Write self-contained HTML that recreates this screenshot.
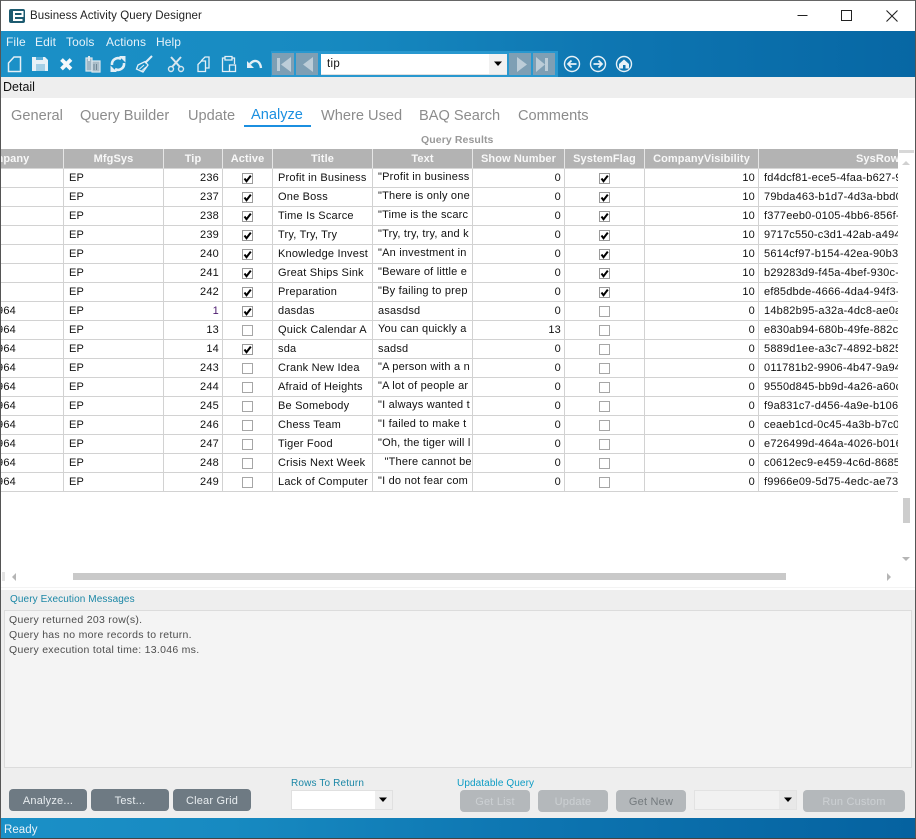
<!DOCTYPE html>
<html><head><meta charset="utf-8"><title>Business Activity Query Designer</title>
<style>
html,body{margin:0;padding:0;width:916px;height:839px;overflow:hidden;background:#fff}
body{position:relative;font-family:"Liberation Sans",Arial,sans-serif;font-size:11px;color:#111}
.a{position:absolute;white-space:nowrap}
.band{background:linear-gradient(90deg,#1b90c7 0%,#178ac1 35%,#0d74b0 70%,#0767a4 100%)}
.tab{position:absolute;top:107px;font-size:14.6px;line-height:18px;color:#8c8c8c;white-space:nowrap}
.m{position:absolute;top:35px;font-size:12px;line-height:14px;color:#e6f2f9;letter-spacing:.1px}
.nb{position:absolute;top:53px;width:22px;height:22px;background:#7e9fb4}
#g{position:absolute;left:0;top:149px;width:898px;height:345px;overflow:hidden}
table{position:absolute;left:-55px;top:0;border-collapse:separate;border-spacing:0;table-layout:fixed;width:974px}
th{height:19px;padding:0;background:#b3b3b3;color:#f8f8f8;font-size:11px;font-weight:bold;text-align:center;border-right:1px solid #e6e6e6;border-bottom:1px solid #d6d6d6;letter-spacing:.1px;overflow:hidden;white-space:nowrap}
td{height:18px;padding:0 5px;border-right:1px solid #d2d2d2;border-bottom:1px solid #d2d2d2;overflow:hidden;white-space:nowrap;letter-spacing:.2px;color:#111;text-overflow:clip}
td.r{text-align:right;padding-right:3px}
td.c{padding:0;text-align:center}
td.co{text-align:right;padding-right:47px}
td:nth-child(6){vertical-align:top;line-height:16px}
td.k:nth-child(6){line-height:18px}
.cb{display:block;margin:0 auto;width:11px;height:11px}
.btn{position:absolute;top:789px;height:22px;width:78px;background:#6e7a83;border-radius:4px;color:#e8edf0;text-align:center;line-height:24px;font-size:11px;letter-spacing:.2px}
.dis{position:absolute;top:790px;height:22px;background:#b4b8bb;border-radius:4px;color:#ccd0d3;text-align:center;line-height:24px;font-size:11px;letter-spacing:.2px}
.lb{position:absolute;font-size:10px;line-height:12px;white-space:nowrap;letter-spacing:.1px}
.msg{position:absolute;left:9px;font-size:10.5px;line-height:13px;color:#4d4d4d;white-space:nowrap;letter-spacing:.28px}
</style></head><body>
<svg width="0" height="0" style="position:absolute"><defs>
<symbol id="y" viewBox="0 0 11 11"><rect x=".5" y=".5" width="10" height="10" fill="#fff" stroke="#9a9a9a"/><path d="M2.500 5.500L4.500 8.200 8.800 2.600" fill="none" stroke="#000" stroke-width="2"/></symbol>
<symbol id="n" viewBox="0 0 11 11"><rect x=".5" y=".5" width="10" height="10" fill="#fff" stroke="#a6a6a6"/></symbol>
</defs></svg>

<!-- window chrome -->
<div class="a" style="left:0;top:0;width:916px;height:1px;background:#666"></div>
<div class="a" style="left:9px;top:9px;width:16px;height:14px;background:#1d5b70;border-radius:2px"></div>
<svg class="a" style="left:9px;top:9px" width="16" height="14"><path d="M5 7H13.500V3H5V11H13.500" fill="none" stroke="#fff" stroke-width="2"/></svg>
<div class="a" style="left:30px;top:9px;font-size:11.5px;line-height:14px;color:#222;letter-spacing:.08px">Business Activity Query Designer</div>
<svg class="a" style="left:790px;top:5px" width="120" height="20"><path d="M7.500 10.500H17.500" stroke="#222"/><rect x="51.500" y="5.500" width="10" height="10" fill="none" stroke="#222"/><path d="M96.500 5.500L107.500 16.500M107.500 5.500L96.500 16.500" stroke="#222" stroke-width="1.100"/></svg>

<div class="a band" style="left:1px;top:31px;width:914px;height:46px"></div>
<div class="m" style="left:6px">File</div>
<div class="m" style="left:35px">Edit</div>
<div class="m" style="left:66px">Tools</div>
<div class="m" style="left:106px">Actions</div>
<div class="m" style="left:156px">Help</div>

<svg class="a" style="left:0;top:50px" width="270" height="27" fill="none" stroke="#e4eff6" stroke-width="1.500">
<path d="M8.500 21.500V13L14 7H20.500V21.500Z"/>
<path d="M32 7H45L48 10V21H32Z" fill="#e8f1f7" stroke="none"/><path d="M36 7H43V10H36Z" fill="#5aaed8" stroke="none"/><path d="M36 14H45V21H36Z" fill="#a4cfe6" stroke="none"/>
<path d="M61.500 9.500L71 19M71 9.500L61.500 19" stroke="#f4f8fb" stroke-width="3.800"/>
<path d="M86 8H92V21H86Z" fill="#9fb7c6" stroke="#dbe7ee" stroke-width="1.200"/><path d="M92 11H100V22H92Z" fill="#a9bdc9" stroke="#dbe7ee" stroke-width="1.200"/><path d="M88 6H90V11H88Z" fill="#dbe7ee" stroke="none"/><path d="M94 14V20M96.500 14V20" stroke="#6f8796" stroke-width="1"/>
<path d="M112 15A6 6 0 0 1 121 9M124 13A6 6 0 0 1 115 19" stroke-width="2.600"/><path d="M119 6L125.500 6 125.500 12.500ZM117 22L110.500 22 110.500 15.500Z" fill="#e4eff6" stroke="none"/>
<path d="M145 13L152 6" stroke-width="2"/><path d="M138 15L145 11.500 148 15 143 22 136.500 19Z" stroke-width="1.300"/><path d="M139.500 19L144 15M141.500 21L146 17" stroke-width="1"/>
<path d="M171 7L180 17M181 7L172 17" stroke-width="2" stroke="#d8e6ee"/><circle cx="171" cy="19" r="2.500" stroke-width="1.400" stroke="#d8e6ee"/><circle cx="181" cy="19" r="2.500" stroke-width="1.400" stroke="#d8e6ee"/>
<path d="M198 14.500L201.500 11H205.500V21.500H198ZM201.500 11V10.500L205 7H209V18H205.500" stroke-width="1.300"/>
<path d="M225 8H222.500V21.500H229M232 8H234.500V14M225 6.500H232V10H225ZM229.500 15H235.500V21.500H229.500Z" stroke-width="1.300"/>
<path d="M250 14C254 9 260 10 261 18" stroke-width="2.400"/><path d="M247 11V18H254Z" fill="#e4eff6" stroke="none"/>
</svg>

<div class="a" style="left:271px;top:51px;width:287px;height:26px;background:#2898cf"></div>
<div class="nb" style="left:272px"></div><div class="nb" style="left:296px"></div>
<div class="nb" style="left:509px"></div><div class="nb" style="left:533px"></div>
<svg class="a" style="left:270px;top:51px" width="290" height="26" fill="#bccdd8"><path d="M7 7H10V20H7ZM21 6V21L11 13.500ZM43 6V21L33 13.500Z"/><path d="M247 6V21L257 13.500ZM266 6V21L275 13.500ZM275 7H278V20H275Z"/></svg>
<div class="a" style="left:321px;top:54px;width:186px;height:20px;background:#fff;border-bottom:1px solid #e0e0e0"></div>
<div class="a" style="left:489px;top:54px;width:18px;height:20px;background:#f1f1f1"></div>
<svg class="a" style="left:493px;top:61px" width="10" height="6"><path d="M1 0.500H9L5 5Z" fill="#000"/></svg>
<div class="a" style="left:327px;top:57px;font-size:11.500px;line-height:14px;color:#111;letter-spacing:.3px">tip</div>
<svg class="a" style="left:562px;top:53px" width="72" height="22" fill="none" stroke="#e7f1f7" stroke-width="1.400">
<circle cx="10" cy="11" r="7.500"/><path d="M14.500 11H6M9.500 7.500L6 11 9.500 14.500" stroke-width="1.700"/>
<circle cx="36" cy="11" r="7.500"/><path d="M31.500 11H40M36.500 7.500L40 11 36.500 14.500" stroke-width="1.700"/>
<circle cx="62" cy="11" r="7.500"/><path d="M57 11L62 6.500 67 11V15.500H57Z" fill="#e7f1f7" stroke="none"/><path d="M61 12H63.500V15.500H61Z" fill="#0d74b0" stroke="none"/>
</svg>

<!-- detail band -->
<div class="a" style="left:1px;top:77px;width:914px;height:21px;background:#eeeeee"></div>
<div class="a" style="left:3px;top:80px;font-size:12.500px;line-height:14px;color:#111">Detail</div>

<!-- tabs -->
<div class="tab" style="left:11px">General</div>
<div class="tab" style="left:80px">Query Builder</div>
<div class="tab" style="left:188px">Update</div>
<div class="tab" style="left:251px;top:106px;color:#1b8fe0">Analyze</div>
<div class="a" style="left:244px;top:125px;width:67px;height:2px;background:#1b8fe0"></div>
<div class="tab" style="left:321px">Where Used</div>
<div class="tab" style="left:419px">BAQ Search</div>
<div class="tab" style="left:518px">Comments</div>

<div class="a" style="left:421px;top:134px;font-size:10.500px;line-height:12px;font-weight:bold;color:#999;letter-spacing:.1px">Query Results</div>

<!-- grid -->
<div id="g"><table>
<colgroup><col style="width:119px"><col style="width:100px"><col style="width:59px"><col style="width:50px"><col style="width:100px"><col style="width:100px"><col style="width:92px"><col style="width:80px"><col style="width:114px"><col style="width:160px"></colgroup>
<tr><th>Company</th><th>MfgSys</th><th>Tip</th><th>Active</th><th>Title</th><th>Text</th><th>Show Number</th><th>SystemFlag</th><th>CompanyVisibility</th><th style="text-align:left;padding-left:97px">SysRowID</th></tr>
<tr><td></td><td>EP</td><td class="r">236</td><td class="c"><svg class="cb"><use href="#y"/></svg></td><td>Profit in Business</td><td>"Profit in business</td><td class="r">0</td><td class="c"><svg class="cb"><use href="#y"/></svg></td><td class="r">10</td><td>fd4dcf81-ece5-4faa-b627-9a1c3</td></tr>
<tr><td></td><td>EP</td><td class="r">237</td><td class="c"><svg class="cb"><use href="#y"/></svg></td><td>One Boss</td><td>"There is only one</td><td class="r">0</td><td class="c"><svg class="cb"><use href="#y"/></svg></td><td class="r">10</td><td>79bda463-b1d7-4d3a-bbd0-1e2f</td></tr>
<tr><td></td><td>EP</td><td class="r">238</td><td class="c"><svg class="cb"><use href="#y"/></svg></td><td>Time Is Scarce</td><td>"Time is the scarc</td><td class="r">0</td><td class="c"><svg class="cb"><use href="#y"/></svg></td><td class="r">10</td><td>f377eeb0-0105-4bb6-856f-9c1d2</td></tr>
<tr><td></td><td>EP</td><td class="r">239</td><td class="c"><svg class="cb"><use href="#y"/></svg></td><td>Try, Try, Try</td><td>"Try, try, try, and k</td><td class="r">0</td><td class="c"><svg class="cb"><use href="#y"/></svg></td><td class="r">10</td><td>9717c550-c3d1-42ab-a494-1f2e3</td></tr>
<tr><td></td><td>EP</td><td class="r">240</td><td class="c"><svg class="cb"><use href="#y"/></svg></td><td>Knowledge Invest</td><td>"An investment in</td><td class="r">0</td><td class="c"><svg class="cb"><use href="#y"/></svg></td><td class="r">10</td><td>5614cf97-b154-42ea-90b3-9e1d</td></tr>
<tr><td></td><td>EP</td><td class="r">241</td><td class="c"><svg class="cb"><use href="#y"/></svg></td><td>Great Ships Sink</td><td>"Beware of little e</td><td class="r">0</td><td class="c"><svg class="cb"><use href="#y"/></svg></td><td class="r">10</td><td>b29283d9-f45a-4bef-930c-9e1d</td></tr>
<tr><td></td><td>EP</td><td class="r">242</td><td class="c"><svg class="cb"><use href="#y"/></svg></td><td>Preparation</td><td>"By failing to prep</td><td class="r">0</td><td class="c"><svg class="cb"><use href="#y"/></svg></td><td class="r">10</td><td>ef85dbde-4666-4da4-94f3-9e1d</td></tr>
<tr><td class="co">964</td><td>EP</td><td class="r" style="color:#4b1a6e">1</td><td class="c"><svg class="cb"><use href="#y"/></svg></td><td>dasdas</td><td class="k">asasdsd</td><td class="r">0</td><td class="c"><svg class="cb"><use href="#n"/></svg></td><td class="r">0</td><td>14b82b95-a32a-4dc8-ae0a-1e2f</td></tr>
<tr><td class="co">964</td><td>EP</td><td class="r">13</td><td class="c"><svg class="cb"><use href="#n"/></svg></td><td>Quick Calendar A</td><td>You can quickly a</td><td class="r">13</td><td class="c"><svg class="cb"><use href="#n"/></svg></td><td class="r">0</td><td>e830ab94-680b-49fe-882c-9e1d</td></tr>
<tr><td class="co">964</td><td>EP</td><td class="r">14</td><td class="c"><svg class="cb"><use href="#y"/></svg></td><td>sda</td><td class="k">sadsd</td><td class="r">0</td><td class="c"><svg class="cb"><use href="#n"/></svg></td><td class="r">0</td><td>5889d1ee-a3c7-4892-b825-1e2f</td></tr>
<tr><td class="co">964</td><td>EP</td><td class="r">243</td><td class="c"><svg class="cb"><use href="#n"/></svg></td><td>Crank New Idea</td><td>"A person with a n</td><td class="r">0</td><td class="c"><svg class="cb"><use href="#n"/></svg></td><td class="r">0</td><td>011781b2-9906-4b47-9a94-1e2f</td></tr>
<tr><td class="co">964</td><td>EP</td><td class="r">244</td><td class="c"><svg class="cb"><use href="#n"/></svg></td><td>Afraid of Heights</td><td>"A lot of people ar</td><td class="r">0</td><td class="c"><svg class="cb"><use href="#n"/></svg></td><td class="r">0</td><td>9550d845-bb9d-4a26-a60c-1e2f</td></tr>
<tr><td class="co">964</td><td>EP</td><td class="r">245</td><td class="c"><svg class="cb"><use href="#n"/></svg></td><td>Be Somebody</td><td>"I always wanted t</td><td class="r">0</td><td class="c"><svg class="cb"><use href="#n"/></svg></td><td class="r">0</td><td>f9a831c7-d456-4a9e-b106-1e2f</td></tr>
<tr><td class="co">964</td><td>EP</td><td class="r">246</td><td class="c"><svg class="cb"><use href="#n"/></svg></td><td>Chess Team</td><td>"I failed to make t</td><td class="r">0</td><td class="c"><svg class="cb"><use href="#n"/></svg></td><td class="r">0</td><td>ceaeb1cd-0c45-4a3b-b7c0-1e2f</td></tr>
<tr><td class="co">964</td><td>EP</td><td class="r">247</td><td class="c"><svg class="cb"><use href="#n"/></svg></td><td>Tiger Food</td><td>"Oh, the tiger will l</td><td class="r">0</td><td class="c"><svg class="cb"><use href="#n"/></svg></td><td class="r">0</td><td>e726499d-464a-4026-b016-1e2f</td></tr>
<tr><td class="co">964</td><td>EP</td><td class="r">248</td><td class="c"><svg class="cb"><use href="#n"/></svg></td><td>Crisis Next Week</td><td>&nbsp;&nbsp;"There cannot be</td><td class="r">0</td><td class="c"><svg class="cb"><use href="#n"/></svg></td><td class="r">0</td><td>c0612ec9-e459-4c6d-8685-1e2f</td></tr>
<tr><td class="co">964</td><td>EP</td><td class="r">249</td><td class="c"><svg class="cb"><use href="#n"/></svg></td><td>Lack of Computer</td><td>"I do not fear com</td><td class="r">0</td><td class="c"><svg class="cb"><use href="#n"/></svg></td><td class="r">0</td><td>f9966e09-5d75-4edc-ae73-1e2f</td></tr>
</table></div>

<!-- scrollbars -->
<div class="a" style="left:899px;top:150px;width:15px;height:3px;background:#d8d8d8"></div>
<svg class="a" style="left:900px;top:159px" width="12" height="8"><path d="M2 6H10L6 2Z" fill="#d0d0d0"/></svg>
<div class="a" style="left:903px;top:498px;width:7px;height:25px;background:#cdcdcd"></div>
<svg class="a" style="left:900px;top:556px" width="12" height="7"><path d="M2 1H10L6 5Z" fill="#b5b5b5"/></svg>
<div class="a" style="left:2px;top:572px;width:3px;height:9px;background:#e4e4e4"></div>
<svg class="a" style="left:10px;top:572px" width="8" height="10"><path d="M6 1V9L2 5Z" fill="#b5b5b5"/></svg>
<div class="a" style="left:73px;top:573px;width:713px;height:7px;background:#c9c9c9"></div>
<svg class="a" style="left:885px;top:572px" width="8" height="10"><path d="M2 1V9L6 5Z" fill="#b5b5b5"/></svg>
<div class="a" style="left:1px;top:587px;width:914px;height:1px;background:#f3f3f3"></div>

<!-- lower panel -->
<div class="a" style="left:1px;top:590px;width:914px;height:228px;background:#eeeeee"></div>
<div class="lb" style="left:10px;top:594px;color:#1b87a6">Query Execution Messages</div>
<div class="a" style="left:4px;top:610px;width:906px;height:156px;background:#f4f4f4;border:1px solid #dcdcdc"></div>
<div class="msg" style="top:614px">Query returned 203 row(s).</div>
<div class="msg" style="top:629px">Query has no more records to return.</div>
<div class="msg" style="top:644px">Query execution total time: 13.046 ms.</div>

<div class="btn" style="left:9px">Analyze...</div>
<div class="btn" style="left:91px">Test...</div>
<div class="btn" style="left:173px">Clear Grid</div>

<div class="lb" style="left:291px;top:778px;color:#1b87a6;letter-spacing:.15px">Rows To Return</div>
<div class="a" style="left:291px;top:790px;width:100px;height:18px;background:#fff;border:1px solid #e0e0e0"></div>
<div class="a" style="left:375px;top:791px;width:17px;height:18px;background:#eeeeee"></div>
<svg class="a" style="left:378px;top:797px" width="10" height="6"><path d="M1 .5H9L5 5Z" fill="#000"/></svg>

<div class="lb" style="left:457px;top:778px;color:#0d9cc4">Updatable Query</div>
<div class="dis" style="left:460px;width:70px">Get List</div>
<div class="dis" style="left:538px;width:70px">Update</div>
<div class="dis" style="left:616px;width:70px;color:#747a7e">Get New</div>
<div class="a" style="left:694px;top:790px;width:101px;height:18px;background:#f1f1f1;border:1px solid #e2e2e2"></div>
<div class="a" style="left:779px;top:791px;width:17px;height:18px;background:#e8e8e8"></div>
<svg class="a" style="left:783px;top:797px" width="10" height="6"><path d="M1 .5H9L5 5Z" fill="#000"/></svg>
<div class="dis" style="left:803px;width:102px">Run Custom</div>

<!-- status bar -->
<div class="a band" style="left:1px;top:818px;width:914px;height:20px;background:linear-gradient(90deg,#1b90c7 0%,#178ac1 25%,#0d74b0 60%,#0562a0 100%)"></div>
<div class="a" style="left:4px;top:823px;font-size:11.500px;line-height:14px;color:#e8f3f9;letter-spacing:.05px">Ready</div>

<!-- outer border -->
<div class="a" style="left:0;top:0;width:1px;height:839px;background:#555"></div>
<div class="a" style="left:915px;top:0;width:1px;height:839px;background:#555"></div>
<div class="a" style="left:0;top:838px;width:916px;height:1px;background:#444"></div>
</body></html>
